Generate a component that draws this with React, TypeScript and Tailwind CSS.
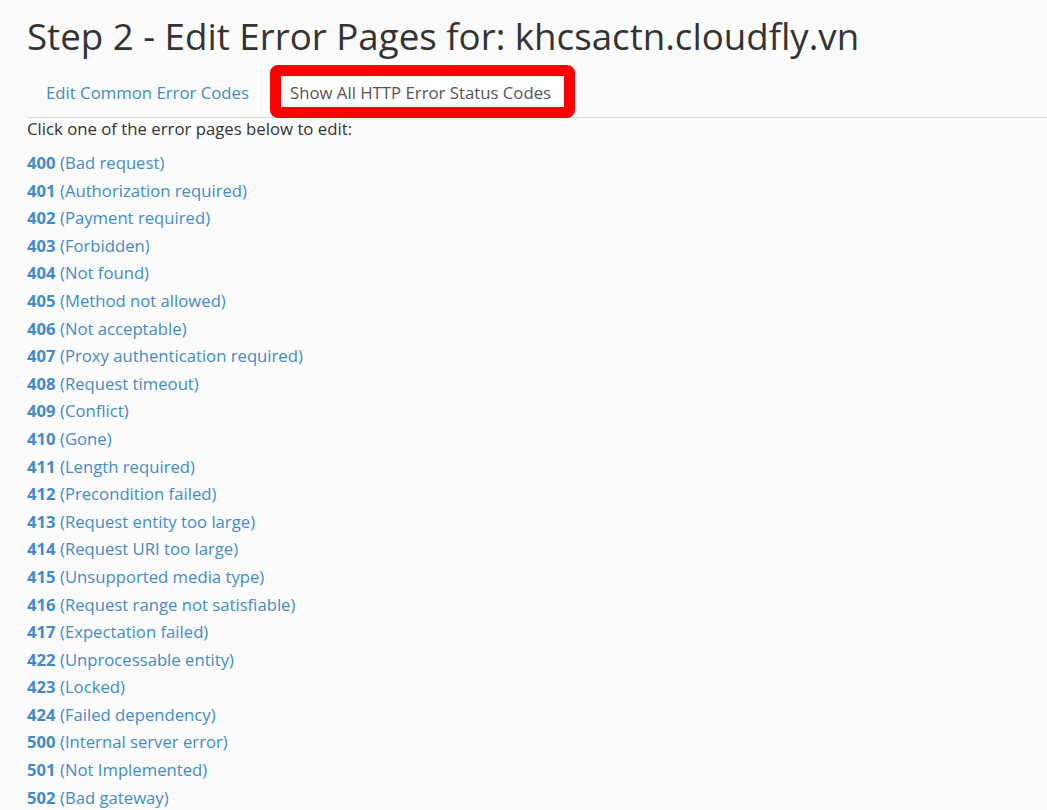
const CODES: [string, string][] = [
  ['400', 'Bad request'],
  ['401', 'Authorization required'],
  ['402', 'Payment required'],
  ['403', 'Forbidden'],
  ['404', 'Not found'],
  ['405', 'Method not allowed'],
  ['406', 'Not acceptable'],
  ['407', 'Proxy authentication required'],
  ['408', 'Request timeout'],
  ['409', 'Conflict'],
  ['410', 'Gone'],
  ['411', 'Length required'],
  ['412', 'Precondition failed'],
  ['413', 'Request entity too large'],
  ['414', 'Request URI too large'],
  ['415', 'Unsupported media type'],
  ['416', 'Request range not satisfiable'],
  ['417', 'Expectation failed'],
  ['422', 'Unprocessable entity'],
  ['423', 'Locked'],
  ['424', 'Failed dependency'],
  ['500', 'Internal server error'],
  ['501', 'Not Implemented'],
  ['502', 'Bad gateway'],
];

export default function App() {
  return (
    <div className="min-h-[810px] bg-[#fbfbfb] pl-[27px] text-[#333] font-['Open_Sans',sans-serif]">
      <h1 className="pt-[11px] text-[36.7px] leading-[50px] text-[#333]">
        Step 2 - Edit Error Pages for: khcsactn.cloudfly.vn
      </h1>

      {/* tabs — the active one carries the red highlight frame */}
      <div className="mt-[4px] flex items-end border-b border-[#ddd]">
        <a className="pl-[19px] pr-[21px] pb-[13px] text-[16.75px] leading-[22px] text-[#428bca]">
          Edit Common Error Codes
        </a>
        <div className="-mb-px rounded-[8px] border-[11px] border-[#ff0000] bg-white">
          <span className="block pl-[9px] pr-[13px] pt-[6px] pb-[3px] text-[16.75px] leading-[22px] text-[#555]">
            Show All HTTP Error Status Codes
          </span>
        </div>
      </div>

      <p className="text-[16.75px] leading-[22px]">Click one of the error pages below to edit:</p>

      <ul className="mt-[9px]">
        {CODES.map(([code, label]) => (
          <li key={code} className="text-[16.7px] leading-[27.6px]">
            <a className="text-[#428bca]">
              <span className="font-bold">{code}</span> ({label})
            </a>
          </li>
        ))}
      </ul>
    </div>
  );
}
